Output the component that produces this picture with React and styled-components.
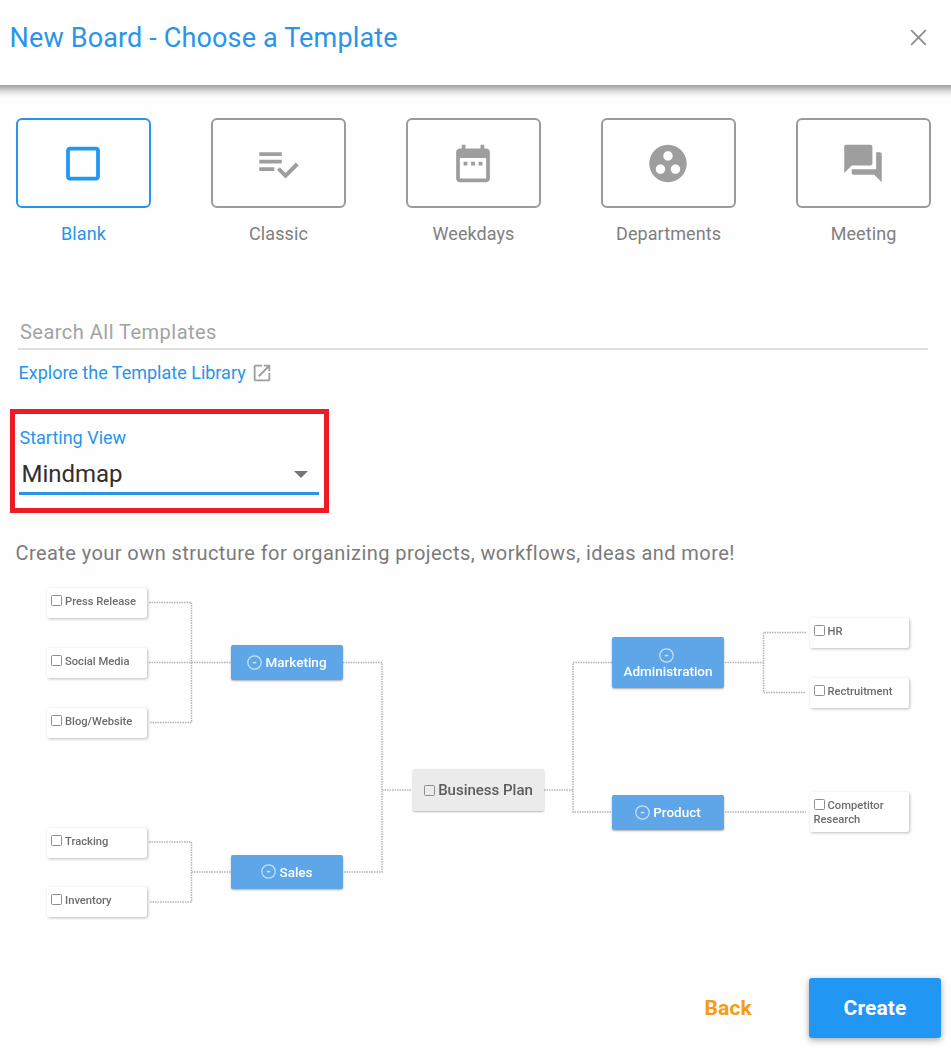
import React from "react";
import styled, { createGlobalStyle, css } from "styled-components";

const Global = createGlobalStyle`
  *, *::before, *::after { box-sizing: border-box; }
  body { margin: 0; background: #fff; font-family: Roboto, "Liberation Sans", sans-serif; }
  button, input { font: inherit; }
`;

const Dialog = styled.main`
  width: 951px;
  height: 1053px;
  display: flex;
  flex-direction: column;
  overflow: hidden;
  background: #fefefe;
`;

const Header = styled.header`
  flex: none;
  height: 85px;
  margin: 0 -12px;
  padding: 0 36px 10px 21.5px;
  display: flex;
  align-items: center;
  justify-content: space-between;
  background: #fff;
  box-shadow: 0 2px 10px 1px rgba(0, 0, 0, 0.52);
`;

const Title = styled.h1`
  margin: 0;
  font-size: 27px;
  line-height: 32px;
  font-weight: 400;
  letter-spacing: 0.15px;
  color: #2994ea;
`;

const CloseButton = styled.button`
  display: flex;
  padding: 0;
  border: 0;
  background: none;
  color: #8f8f8f;
`;

const Templates = styled.nav`
  display: flex;
  gap: 60px;
  padding: 33px 0 0 16px;
`;

const Template = styled.div`
  width: 135px;
  display: flex;
  flex-direction: column;
  align-items: center;
  gap: 14px;
  font-size: 18px;
  line-height: 24px;
  letter-spacing: 0.08px;
  color: ${(p) => (p.$active ? "#2994ea" : "#808080")};
`;

const Tile = styled.div`
  width: 135px;
  height: 90px;
  padding-right: 1px;
  display: flex;
  align-items: center;
  justify-content: center;
  border: 2px solid ${(p) => (p.$active ? "#2994ea" : "#9b9b9b")};
  border-radius: 6px;
  color: ${(p) => (p.$active ? "#2196f3" : "#9e9e9e")};
`;

const Search = styled.input`
  display: block;
  width: 910px;
  height: 40px;
  margin: 64px 0 0 18px;
  padding: 6px 2px 0;
  border: 0;
  border-bottom: 2px solid #dfdfdf;
  background: none;
  font-size: 20px;
  letter-spacing: 0.48px;
  &::placeholder { color: #a3a3a3; opacity: 1; }
`;

const LibraryLink = styled.a`
  display: flex;
  align-items: center;
  gap: 5.5px;
  margin: 11px 0 0 18.5px;
  height: 24px;
  font-size: 18px;
  line-height: 24px;
  color: #2994ea;
  svg { color: #9e9e9e; }
`;

const ViewField = styled.section`
  width: 319px;
  height: 104px;
  margin: 24px 0 0 10px;
  padding: 12px 5px 0 4px;
  border: 5px solid #ed1c24;
`;

const FieldLabel = styled.div`
  padding-left: 0.5px;
  font-size: 18px;
  line-height: 24px;
  color: #2994ea;
`;

const Select = styled.div`
  width: 300px;
  height: 45px;
  padding: 6px 11px 0 2.5px;
  display: flex;
  align-items: center;
  justify-content: space-between;
  border-bottom: 3px solid #2a93e8;
  font-size: 24px;
  letter-spacing: -0.05px;
  color: #303030;
`;

const Description = styled.p`
  margin: 28px 0 0 15.5px;
  font-size: 20px;
  line-height: 24px;
  letter-spacing: 0.43px;
  color: #7b7b7b;
`;

const MapCanvas = styled.section`
  position: relative;
  flex: none;
  height: 350px;
  margin-top: 15px;
  filter: blur(0.7px);
`;

const Connectors = styled.svg`
  position: absolute;
  inset: 0;
`;

const kinds = {
  leaf: css`
    width: 99.5px;
    padding: 7px 0 0 4px;
    font-size: 11.2px;
    line-height: 14px;
    font-weight: 500;
    color: #6c6c6c;
    background: #fff;
    box-shadow: 1px 1px 3px rgba(0, 0, 0, 0.26);
  `,
  branch: css`
    width: 112px;
    display: flex;
    flex-wrap: wrap;
    align-items: center;
    align-content: center;
    justify-content: center;
    column-gap: 3px;
    font-size: 13.5px;
    line-height: 16px;
    font-weight: 500;
    color: #fff;
    background: #5ea6e8;
    box-shadow: 0 1px 2px rgba(0, 0, 0, 0.32);
  `,
  root: css`
    width: 131px;
    display: flex;
    align-items: center;
    justify-content: center;
    gap: 3px;
    font-size: 15px;
    font-weight: 500;
    color: #5c5c5c;
    background: #ebebeb;
    box-shadow: 0 1px 2px rgba(0, 0, 0, 0.28);
  `,
};

const Node = styled.div`
  position: absolute;
  left: ${(p) => p.$x}px;
  top: ${(p) => p.$y}px;
  height: ${(p) => p.$h}px;
  border-radius: 2px;
  ${(p) => kinds[p.$kind]}
  ${(p) => p.$stacked && css`
    flex-flow: column nowrap;
    justify-content: center;
    padding-top: 1px;
    svg { margin-right: 4px; }
  `}
`;

const Check = styled.span`
  display: inline-block;
  flex: none;
  width: 11px;
  height: 11px;
  margin-right: ${(p) => (p.$root ? 0 : 3)}px;
  vertical-align: -1px;
  border: 1px solid #8e8e8e;
  border-radius: 1.5px;
`;

const Footer = styled.footer`
  display: flex;
  justify-content: flex-end;
  align-items: center;
  gap: 57px;
  margin-top: 48px;
  padding-right: 10px;
`;

const BackButton = styled.button`
  padding: 0;
  border: 0;
  background: none;
  font-size: 21px;
  font-weight: 700;
  letter-spacing: 0.2px;
  color: #f69b13;
`;

const CreateButton = styled.button`
  width: 132px;
  height: 60px;
  padding: 0;
  border: 0;
  border-radius: 3px;
  background: #2196f3;
  font-size: 21px;
  font-weight: 700;
  letter-spacing: 0.1px;
  color: #fff;
  box-shadow: 0 2px 6px rgba(0, 0, 0, 0.35);
`;

const Icon = ({ d, width, height }) => (
  <svg width={width} height={height} viewBox="0 0 24 24" fill="currentColor">
    <path d={d} />
  </svg>
);

const templates = [
  ["Blank", "M19 3H5c-1.1 0-2 .9-2 2v14c0 1.1.9 2 2 2h14c1.1 0 2-.9 2-2V5c0-1.1-.9-2-2-2zm0 16H5V5h14v14z"],
  ["Classic", "M14 10H2v2h12v-2zm0-4H2v2h12V6zM2 16h8v-2H2v2zm19.5-4.5L23 13l-6.99 7-4.51-4.5L13 14l3.01 3 5.49-5.5z"],
  ["Weekdays", "M9 11H7v2h2v-2zm4 0h-2v2h2v-2zm4 0h-2v2h2v-2zm2-7h-1V2h-2v2H8V2H6v2H5c-1.11 0-1.99.9-1.99 2L3 20c0 1.1.89 2 2 2h14c1.1 0 2-.9 2-2V6c0-1.1-.9-2-2-2zm0 16H5V9h14v11z"],
  ["Departments", "M12 2C6.48 2 2 6.48 2 12s4.48 10 10 10 10-4.48 10-10S17.52 2 12 2zM8 17.5c-1.38 0-2.5-1.12-2.5-2.5s1.12-2.5 2.5-2.5 2.5 1.12 2.5 2.5-1.12 2.5-2.5 2.5zM9.5 8c0-1.38 1.12-2.5 2.5-2.5s2.5 1.12 2.5 2.5-1.12 2.5-2.5 2.5S9.5 9.38 9.5 8zm6.5 9.5c-1.38 0-2.5-1.12-2.5-2.5s1.12-2.5 2.5-2.5 2.5 1.12 2.5 2.5-1.12 2.5-2.5 2.5z"],
  ["Meeting", "M21 6h-2v9H6v2c0 .55.45 1 1 1h11l4 4V7c0-.55-.45-1-1-1zm-4 6V3c0-.55-.45-1-1-1H3c-.55 0-1 .45-1 1v14l4-4h10c.55 0 1-.45 1-1z"],
];

const leaves = [
  ["Press Release", 47, 8, 30],
  ["Social Media", 47, 68, 30],
  ["Blog/Website", 47, 128, 30],
  ["Tracking", 47, 248, 30],
  ["Inventory", 47, 307.4, 30],
  ["HR", 809.5, 38, 30],
  ["Rectruitment", 809.5, 98, 30],
  ["Competitor Research", 809.5, 212.4, 39.5],
];

const branches = [
  ["Marketing", 231, 65, 34.5],
  ["Sales", 231, 274.5, 34.5],
  ["Administration", 612, 57, 51],
  ["Product", 612, 215, 34.5],
];

const Collapse = () => (
  <svg width="15" height="15" viewBox="0 0 15 15" fill="none" stroke="#c8e2fb">
    <circle cx="7.5" cy="7.5" r="6.7" strokeWidth="1.2" />
    <path d="M5.7 7.6h3.6" strokeWidth="1.6" />
  </svg>
);

export default function App() {
  return (
    <Dialog>
      <Global />
      <Header>
        <Title>New Board - Choose a Template</Title>
        <CloseButton aria-label="Close">
          <svg width="17" height="17" viewBox="0 0 17 17" stroke="currentColor" strokeWidth="1.9" strokeLinecap="round">
            <path d="M1.7 1.7 15.3 15.3M15.3 1.7 1.7 15.3" />
          </svg>
        </CloseButton>
      </Header>

      <Templates>
        {templates.map(([name, d], i) => (
          <Template key={name} $active={i === 0}>
            <Tile $active={i === 0}>
              <Icon d={d} width={46} height={45} />
            </Tile>
            {name}
          </Template>
        ))}
      </Templates>

      <Search placeholder="Search All Templates" />
      <LibraryLink>
        Explore the Template Library
        <Icon
          width={22}
          height={22}
          d="M19 19H5V5h7V3H5c-1.11 0-2 .9-2 2v14c0 1.1.89 2 2 2h14c1.1 0 2-.9 2-2v-7h-2v7zM14 3v2h3.59l-9.83 9.83 1.41 1.41L19 6.41V10h2V3h-7z"
        />
      </LibraryLink>

      <ViewField>
        <FieldLabel>Starting View</FieldLabel>
        <Select>
          Mindmap
          <svg width="14" height="7" viewBox="0 0 14 7" fill="#757575">
            <path d="M0 0h14L7 7z" />
          </svg>
        </Select>
      </ViewField>

      <Description>Create your own structure for organizing projects, workflows, ideas and more!</Description>

      <MapCanvas>
        <Connectors width="951" height="350" fill="none" stroke="#b4b4b4" strokeWidth="1.5" strokeDasharray="1.5 1">
          <path d="M149 22.5H191.5V142.5H149M149 82.5H231M343 82.5H382V292H343M382 210H412" />
          <path d="M149 262H191.5V322H149M191.5 292H231" />
          <path d="M544 210H573M612 82.5H573V232H612M725 82.5H763.5M806 52.5H763.5V112.5H806M725 232H806" />
        </Connectors>
        {leaves.map(([name, x, y, h]) => (
          <Node key={name} $kind="leaf" $x={x} $y={y} $h={h}>
            <Check />
            {name}
          </Node>
        ))}
        {branches.map(([name, x, y, h]) => (
          <Node key={name} $kind="branch" $x={x} $y={y} $h={h} $stacked={h > 40}>
            <Collapse />
            {name}
          </Node>
        ))}
        <Node $kind="root" $x={413} $y={189} $h={42}>
          <Check $root />
          Business Plan
        </Node>
      </MapCanvas>

      <Footer>
        <BackButton>Back</BackButton>
        <CreateButton>Create</CreateButton>
      </Footer>
    </Dialog>
  );
}
